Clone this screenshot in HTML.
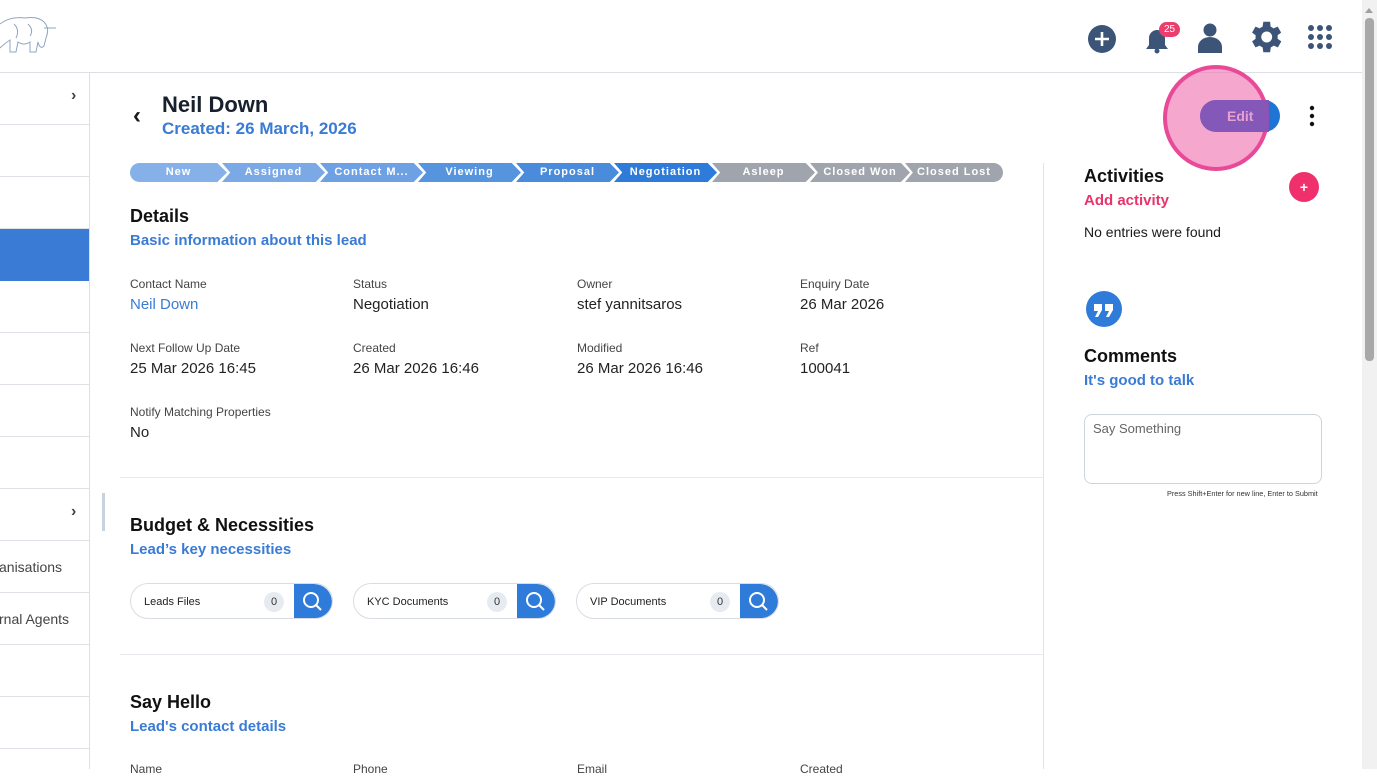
<!DOCTYPE html>
<html><head><meta charset="utf-8">
<style>
*{margin:0;padding:0;box-sizing:border-box}
body{width:1377px;height:769px;overflow:hidden;background:#fff;font-family:"Liberation Sans",sans-serif;position:relative;color:#1a1a1a}
.a{position:absolute;white-space:nowrap}
.lbl{font-size:12px;color:#444}
.val{font-size:15px;color:#222}
.h{font-size:18px;font-weight:bold;color:#111}
.sub{font-size:15px;font-weight:bold;color:#3a7bd5}
.sb{position:absolute;left:0;width:89px;height:52px;border-bottom:1px solid #dfe3e8;font-size:14px;color:#444}
.stage{position:absolute;top:163px;height:19px;color:#fff;font-size:11px;font-weight:bold;letter-spacing:1px;text-align:center;line-height:19px}
.pill{position:absolute;top:583px;width:203px;height:36px;border:1px solid #d8dde4;border-radius:18px;overflow:hidden;font-size:11px;color:#222}
.pill .t{position:absolute;left:13px;top:12px}
.pill .c{position:absolute;left:133px;top:8px;width:20px;height:20px;border-radius:10px;background:#e6ebf2;font-size:11px;text-align:center;line-height:20px;color:#333}
.pill .s{position:absolute;right:0;top:0;width:38px;height:36px;background:#2f7bd9;border-radius:0 18px 18px 0}
</style></head><body>
<svg class="a" style="left:0;top:14px" width="58" height="42" viewBox="0 0 58 42" fill="none" stroke="#8fa4c4" stroke-width="1"><path d="M0 10 Q10 2 25 4 Q38 2 44 8 Q50 14 46 24 L44 32 Q40 36 38 28 L36 38 L30 38 L30 28 Q24 32 18 28 L16 38 L10 38 L10 26 Q4 30 0 34"/><path d="M44 14 L56 14"/><path d="M14 10 Q20 16 16 24"/><path d="M28 10 Q34 16 30 22"/></svg>
<div class="a" style="left:0;top:72px;width:1362px;border-top:1px solid #dcdfe3"></div>
<div class="a" style="left:89px;top:73px;height:696px;border-left:1px solid #dcdfe3"></div>
<svg class="a" style="left:1087px;top:24px" width="30" height="30"><circle cx="15" cy="15" r="14" fill="#3c5478"/><path d="M15 8v14M8 15h14" stroke="#fff" stroke-width="2.6"/></svg>
<svg class="a" style="left:1142px;top:24px" width="30" height="30"><path d="M4 25h22l-3-4V14a8 8 0 0 0-16 0v7z" fill="#3c5478"/><circle cx="15" cy="27" r="2.5" fill="#3c5478"/></svg>
<div class="a" style="left:1159px;top:22px;width:21px;height:15px;border-radius:8px;background:#ec3d6c;color:#fff;font-size:10px;text-align:center;line-height:15px">25</div>
<svg class="a" style="left:1196px;top:22px" width="28" height="32"><circle cx="14" cy="8" r="6.5" fill="#3c5478"/><path d="M2 31v-6a12 10 0 0 1 24 0v6z" fill="#3c5478"/></svg>
<svg class="a" style="left:1248px;top:20px" width="34" height="34" viewBox="2 2 20 20"><path fill="#3c5478" d="M19.4 13a7.5 7.5 0 0 0 0-2l2.1-1.6-2-3.5-2.5 1a7 7 0 0 0-1.7-1L15 3h-4l-.4 2.9a7 7 0 0 0-1.7 1l-2.5-1-2 3.5L6.5 11a7.5 7.5 0 0 0 0 2l-2.1 1.6 2 3.5 2.5-1a7 7 0 0 0 1.7 1L11 21h4l.4-2.9a7 7 0 0 0 1.7-1l2.5 1 2-3.5zM13 15.2a3.2 3.2 0 1 1 0-6.4 3.2 3.2 0 0 1 0 6.4z"/></svg>
<svg class="a" style="left:1307px;top:24px" width="26" height="26"><g fill="#3c5478"><circle cx="4" cy="4" r="3"/><circle cx="13" cy="4" r="3"/><circle cx="22" cy="4" r="3"/><circle cx="4" cy="13" r="3"/><circle cx="13" cy="13" r="3"/><circle cx="22" cy="13" r="3"/><circle cx="4" cy="22" r="3"/><circle cx="13" cy="22" r="3"/><circle cx="22" cy="22" r="3"/></g></svg>
<div class="a" style="left:1362px;top:0;width:15px;height:769px;background:#f1f1f1"></div>
<div class="a" style="left:1365px;top:18px;width:9px;height:343px;background:#a8a8a8;border-radius:4px"></div>
<div class="a" style="left:1365px;top:4px;width:0;height:0;border:4px solid transparent;border-bottom:5px solid #a0a0a0"></div>
<div class="sb" style="top:73px"><span class="a" style="left:71px;top:14px;font-size:16px;font-weight:bold">›</span></div>
<div class="sb" style="top:125px"></div>
<div class="sb" style="top:177px"></div>
<div class="sb" style="top:229px;background:#3a7bd5;border-color:#3a7bd5"></div>
<div class="sb" style="top:281px"></div>
<div class="sb" style="top:333px"></div>
<div class="sb" style="top:385px"></div>
<div class="sb" style="top:437px"></div>
<div class="sb" style="top:489px"><span class="a" style="left:71px;top:14px;font-size:16px;font-weight:bold">›</span></div>
<div class="sb" style="top:541px"><span class="a" style="left:-1px;top:18px">anisations</span></div>
<div class="sb" style="top:593px"><span class="a" style="left:-1px;top:18px">rnal Agents</span></div>
<div class="sb" style="top:645px"></div>
<div class="sb" style="top:697px"></div>
<div class="a" style="left:102px;top:493px;width:3px;height:38px;background:#c9d3e0"></div>
<div class="a" style="left:133px;top:102px;font-size:24px;font-weight:bold">‹</div>
<div class="a" style="left:162px;top:92px;font-size:22px;font-weight:bold;color:#17202c">Neil Down</div>
<div class="a" style="left:162px;top:119px;font-size:17px;font-weight:bold;color:#3a7bd5">Created: 26 March, 2026</div>
<div class="stage" style="left:130px;width:97px;background:#86b0e8;border-radius:10px 0 0 10px;clip-path:polygon(0 0,90% 0,100% 50%,90% 100%,0 100%)">New</div>
<div class="stage" style="left:222px;width:103px;background:#7ba9e6;clip-path:polygon(0 0,91% 0,100% 50%,91% 100%,0 100%,8% 50%)">Assigned</div>
<div class="stage" style="left:320px;width:103px;background:#6ea1e3;clip-path:polygon(0 0,91% 0,100% 50%,91% 100%,0 100%,8% 50%)">Contact M...</div>
<div class="stage" style="left:418px;width:103px;background:#5794de;clip-path:polygon(0 0,91% 0,100% 50%,91% 100%,0 100%,8% 50%)">Viewing</div>
<div class="stage" style="left:516px;width:103px;background:#4a8bdb;clip-path:polygon(0 0,91% 0,100% 50%,91% 100%,0 100%,8% 50%)">Proposal</div>
<div class="stage" style="left:614px;width:103px;background:#2f7bd9;clip-path:polygon(0 0,91% 0,100% 50%,91% 100%,0 100%,8% 50%)">Negotiation</div>
<div class="stage" style="left:712px;width:103px;background:#a0a5ad;clip-path:polygon(0 0,91% 0,100% 50%,91% 100%,0 100%,8% 50%)">Asleep</div>
<div class="stage" style="left:810px;width:100px;background:#a0a5ad;clip-path:polygon(0 0,91% 0,100% 50%,91% 100%,0 100%,8% 50%)">Closed Won</div>
<div class="stage" style="left:905px;width:98px;background:#a0a5ad;border-radius:0 10px 10px 0;clip-path:polygon(0 0,100% 0,100% 100%,0 100%,8% 50%)">Closed Lost</div>
<div class="a h" style="left:130px;top:206px">Details</div>
<div class="a sub" style="left:130px;top:232px">Basic information about this lead</div>
<div class="a lbl" style="left:130px;top:277px">Contact Name</div><div class="a val" style="left:130px;top:296px;color:#3a7bd5">Neil Down</div>
<div class="a lbl" style="left:353px;top:277px">Status</div><div class="a val" style="left:353px;top:296px">Negotiation</div>
<div class="a lbl" style="left:577px;top:277px">Owner</div><div class="a val" style="left:577px;top:296px">stef yannitsaros</div>
<div class="a lbl" style="left:800px;top:277px">Enquiry Date</div><div class="a val" style="left:800px;top:296px">26 Mar 2026</div>
<div class="a lbl" style="left:130px;top:341px">Next Follow Up Date</div><div class="a val" style="left:130px;top:360px">25 Mar 2026 16:45</div>
<div class="a lbl" style="left:353px;top:341px">Created</div><div class="a val" style="left:353px;top:360px">26 Mar 2026 16:46</div>
<div class="a lbl" style="left:577px;top:341px">Modified</div><div class="a val" style="left:577px;top:360px">26 Mar 2026 16:46</div>
<div class="a lbl" style="left:800px;top:341px">Ref</div><div class="a val" style="left:800px;top:360px">100041</div>
<div class="a lbl" style="left:130px;top:405px">Notify Matching Properties</div><div class="a val" style="left:130px;top:424px">No</div>
<div class="a" style="left:120px;top:477px;width:923px;border-top:1px solid #e6e9ed"></div>
<div class="a h" style="left:130px;top:515px">Budget &amp; Necessities</div>
<div class="a sub" style="left:130px;top:541px">Lead’s key necessities</div>
<div class="pill" style="left:130px"><span class="t">Leads Files</span><span class="c">0</span><span class="s"><svg width="38" height="36"><circle cx="17" cy="16" r="7" fill="none" stroke="#fff" stroke-width="2"/><path d="M22 21l5 5" stroke="#fff" stroke-width="2"/></svg></span></div>
<div class="pill" style="left:353px"><span class="t">KYC Documents</span><span class="c">0</span><span class="s"><svg width="38" height="36"><circle cx="17" cy="16" r="7" fill="none" stroke="#fff" stroke-width="2"/><path d="M22 21l5 5" stroke="#fff" stroke-width="2"/></svg></span></div>
<div class="pill" style="left:576px"><span class="t">VIP Documents</span><span class="c">0</span><span class="s"><svg width="38" height="36"><circle cx="17" cy="16" r="7" fill="none" stroke="#fff" stroke-width="2"/><path d="M22 21l5 5" stroke="#fff" stroke-width="2"/></svg></span></div>
<div class="a" style="left:120px;top:654px;width:923px;border-top:1px solid #e6e9ed"></div>
<div class="a h" style="left:130px;top:692px">Say Hello</div>
<div class="a sub" style="left:130px;top:718px">Lead's contact details</div>
<div class="a lbl" style="left:130px;top:762px">Name</div>
<div class="a lbl" style="left:353px;top:762px">Phone</div>
<div class="a lbl" style="left:577px;top:762px">Email</div>
<div class="a lbl" style="left:800px;top:762px">Created</div>
<div class="a" style="left:1043px;top:163px;height:606px;border-left:1px solid #e0e3e7"></div>
<div class="a" style="left:1200px;top:100px;width:80px;height:32px;border-radius:16px;background:#1f74d6"></div>
<div class="a" style="left:1163px;top:65px;width:106px;height:106px;border-radius:53px;background:rgba(240,120,180,.65);border:4px solid #e84a98"></div>
<div class="a" style="left:1200px;top:100px;width:69px;height:32px;border-radius:16px 0 0 16px;background:#8155b8;opacity:.9"></div>
<div class="a" style="left:1227px;top:108px;font-size:14px;font-weight:bold;color:#e8a0d0">Edit</div>
<svg class="a" style="left:1306px;top:104px" width="12" height="24"><g fill="#111"><circle cx="6" cy="4" r="2.2"/><circle cx="6" cy="12" r="2.2"/><circle cx="6" cy="20" r="2.2"/></g></svg>
<div class="a h" style="left:1084px;top:166px">Activities</div>
<div class="a" style="left:1084px;top:192px;font-size:15px;font-weight:bold;color:#e8336b">Add activity</div>
<div class="a" style="left:1289px;top:172px;width:30px;height:30px;border-radius:15px;background:#f0306c;color:#fff;font-size:14px;font-weight:bold;text-align:center;line-height:30px">+</div>
<div class="a" style="left:1084px;top:224px;font-size:14px">No entries were found</div>
<svg class="a" style="left:1085px;top:290px" width="38" height="38"><circle cx="19" cy="19" r="18" fill="#2f7bd9"/><path d="M9 14h8v6l-4 7h-3l3-6H9zM20 14h8v6l-4 7h-3l3-6h-4z" fill="#fff"/></svg>
<div class="a h" style="left:1084px;top:346px">Comments</div>
<div class="a sub" style="left:1084px;top:372px">It's good to talk</div>
<div class="a" style="left:1084px;top:414px;width:238px;height:70px;border:1px solid #ccd4de;border-radius:8px"><span class="a" style="left:8px;top:6px;font-size:13px;color:#666">Say Something</span></div>
<div class="a" style="left:1167px;top:489px;font-size:7.3px;color:#333">Press Shift+Enter for new line, Enter to Submit</div>
</body></html>
